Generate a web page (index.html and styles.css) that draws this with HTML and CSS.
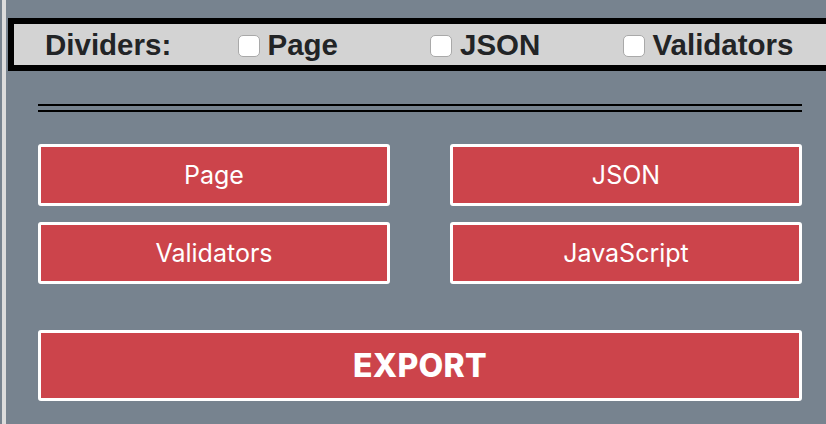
FILE: index.html
```html
<!DOCTYPE html>
<html lang="en">
<head>
<meta charset="UTF-8"/>
<meta name="viewport" content="width=device-width, initial-scale=1.0"/>
<title>Export Panel</title>
<link rel="stylesheet" href="styles.css">
</head>
<body>

<div class="panel">
  <!-- DIVIDER OPTIONS -->
  <div class="dividers">
    <div class="dividers-title">Dividers:</div>
    <label class="divider-option"><input type="checkbox" class="check"/><span>Page</span></label>
    <label class="divider-option"><input type="checkbox" class="check"/><span>JSON</span></label>
    <label class="divider-option"><input type="checkbox" class="check"/><span>Validators</span></label>
  </div>

  <div class="tools">
    <div class="double-rule"></div>

    <div class="source-grid">
      <button class="btn source-btn">Page</button>
      <button class="btn source-btn">JSON</button>
      <button class="btn source-btn">Validators</button>
      <button class="btn source-btn">JavaScript</button>
    </div>

    <button class="btn export-btn">EXPORT</button>
  </div>
</div>

</body>
</html>
```

FILE: styles.css
```css
/* GLOBAL */
body,html {
  margin:0; padding:0; background:#77838f; overflow:hidden; height:100%;
  font-family:"Liberation Sans", Arial, sans-serif;
}
:root {
  --red:#cc444b;
  --ink:#222426;
}

.panel {
  margin-left:2px; border-left:4px solid #dcdcdc; padding:18px 0 0 2px; min-height:100%; box-sizing:border-box;
}

/* DIVIDERS BAR */
.dividers {
  height:41px; background:#d3d3d3; border:6px solid #000; border-right:none;
  display:grid; grid-template-columns:repeat(4,192.5px); align-items:center; padding-left:31px;
  color:var(--ink); font-weight:bold; font-size:29.5px;
}
.dividers-title {line-height:1;}
.divider-option {display:flex; align-items:center; gap:8px; line-height:1; cursor:pointer;}
.check {
  appearance:none; -webkit-appearance:none; margin:3px 0 0 0; width:22px; height:22px; box-sizing:border-box;
  background:#fff; border:1px solid #a9a9a9; border-radius:5px;
}

/* TOOLS */
.tools {margin-left:30px; width:764px;}
.double-rule {
  margin-top:33px; height:4px; border-top:2px solid #000; border-bottom:2px solid #000;
}
.btn {
  display:flex; align-items:center; justify-content:center; box-sizing:border-box;
  background:var(--red); color:#fff; border:3px solid #fff; border-radius:3px; cursor:pointer; margin:0; padding:0;
}
.source-grid {
  margin-top:32px; display:grid; grid-template-columns:352px 352px; column-gap:60px; row-gap:16px;
}
.source-btn {
  height:62px; font-family:Inter, "Liberation Sans", sans-serif; font-size:25px; font-weight:400;
}
.export-btn {
  margin-top:46px; width:100%; height:71px;
  font-family:Inter, "Liberation Sans", sans-serif; font-size:32px; font-weight:800; letter-spacing:0.3px;
}
```
